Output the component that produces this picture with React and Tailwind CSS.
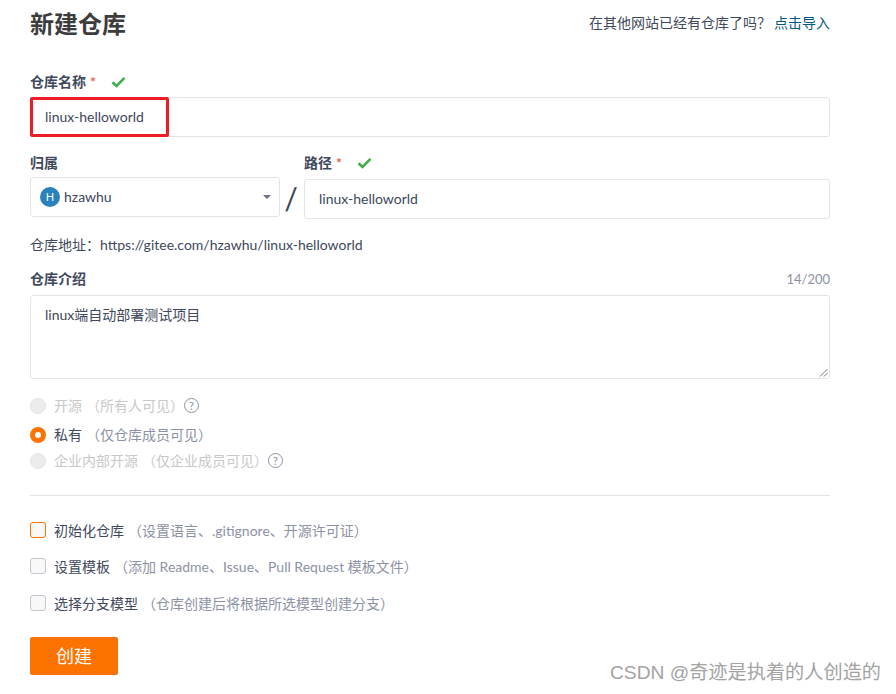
import React from "react";

const FONT = "font-['Lato','Noto_Sans_CJK_SC',sans-serif]";

const Check = () => (
  <svg width="15" height="12" viewBox="0 0 15 12" className="ml-[15px]">
    <path d="M1.5 6.2 L5.5 10 L13.5 1.8" fill="none" stroke="#3fae4b" strokeWidth="2.6" />
  </svg>
);

const Help = () => (
  <span className="mb-[2px] flex h-[15px] w-[15px] items-center justify-center rounded-full border border-[#8c92a4] text-[11px] leading-none text-[#8c92a4]">
    ?
  </span>
);

const Radio = ({ checked, label, hint, help, className }) => (
  <div className={`flex h-[16px] items-center ${className}`}>
    {checked ? (
      <span className="h-[16px] w-[16px] rounded-full border-[5px] border-[#fe7300] bg-white" />
    ) : (
      <span className="h-[16px] w-[16px] rounded-full border border-[#e3e3e3] bg-[#ececec]" />
    )}
    <span className={`ml-[8px] pb-[2px] text-[14px] ${checked ? "text-[#40485b]" : "text-[#c8c8c8]"}`}>{label}</span>
    <span className={`ml-[4px] pb-[2px] text-[14px] ${checked ? "text-[#8c92a4]" : "text-[#c8c8c8]"}`}>{hint}</span>
    {help && <Help />}
  </div>
);

const CheckRow = ({ active, label, hint, className }) => (
  <div className={`flex h-[16px] items-center ${className}`}>
    <span className={`h-[16px] w-[16px] rounded-[3px] border bg-[#f8f8f8] ${active ? "border-[#fe7300]" : "border-[#c4c7d1]"}`} />
    <span className="ml-[8px] text-[14px] text-[#40485b]">{label}</span>
    <span className="ml-[4px] text-[14px] text-[#8c92a4]">{hint}</span>
  </div>
);

const Label = ({ children }) => (
  <span className="text-[14px] leading-[18px] font-bold text-[#40485b]">{children}</span>
);

const Star = () => <span className="ml-[4px] text-[14px] leading-[18px] font-bold text-[#ee5a4f]">*</span>;

export default function App() {
  return (
    <div className={`relative h-[694px] w-[896px] overflow-hidden bg-white ${FONT}`}>
      <div className="w-[830px] pl-[30px]">
        {/* 标题 */}
        <div className="flex h-[48px] items-center justify-between">
          <h1 className="text-[24px] leading-[32px] font-bold text-[#3c3c3c]">新建仓库</h1>
          <div className="pb-[4px] text-[14px] text-[#40485b]">
            在其他网站已经有仓库了吗？<span className="ml-[3px] text-[#005980]">点击导入</span>
          </div>
        </div>

        {/* 仓库名称 */}
        <div className="mt-[25px] flex h-[18px] items-center">
          <Label>仓库名称</Label>
          <Star />
          <Check />
        </div>
        <div className="relative mt-[6px] flex h-[40px] items-center rounded-[3px] border border-[#e3e4eb] pb-[2px] pl-[14px] text-[14px] text-[#40485b]">
          linux-helloworld
          <div className="absolute top-[-1px] left-[-1px] h-[40px] w-[139px] rounded-[2px] border-[3px] border-[#ee1c25]" />
        </div>

        {/* 归属 / 路径 */}
        <div className="mt-[17px] flex">
          <div className="w-[250px]">
            <div className="flex h-[18px] items-center">
              <Label>归属</Label>
            </div>
            <div className="mt-[5px] flex h-[40px] items-center rounded-[3px] border border-[#e3e4eb] pr-[8px] pl-[9px] text-[14px] text-[#40485b]">
              <span className="flex h-[20px] w-[20px] items-center justify-center rounded-full bg-[#2a82bd] text-[11px] text-white">H</span>
              <span className="ml-[4px] flex-1 pb-[2px]">hzawhu</span>
              <span className="h-0 w-0 border-x-[4px] border-t-[4px] border-x-transparent border-t-[#6b7080]" />
            </div>
          </div>
          <div className="flex w-[24px] items-end justify-center pr-[2px] pb-[3px] text-[30px] leading-[36px] text-[#40485b]">/</div>
          <div className="flex-1">
            <div className="flex h-[18px] items-center">
              <Label>路径</Label>
              <Star />
              <Check />
            </div>
            <div className="mt-[7px] flex h-[40px] items-center rounded-[3px] border border-[#e3e4eb] pb-[2px] pl-[14px] text-[14px] text-[#40485b]">
              linux-helloworld
            </div>
          </div>
        </div>

        {/* 仓库地址 */}
        <div className="mt-[17px] text-[14px] leading-[18px] text-[#40485b]">
          仓库地址：https://gitee.com/hzawhu/linux-helloworld
        </div>

        {/* 仓库介绍 */}
        <div className="mt-[16px] flex h-[18px] items-center justify-between">
          <Label>仓库介绍</Label>
          <span className="pt-[2px] text-[13px] text-[#8c92a4]">14/200</span>
        </div>
        <div className="relative mt-[7px] h-[84px] rounded-[3px] border border-[#e3e4eb] px-[14px] pt-[10px] text-[14px] leading-[18px] text-[#40485b]">
          linux端自动部署测试项目
          <svg width="9" height="9" viewBox="0 0 9 9" className="absolute right-[1px] bottom-[1px]">
            <path d="M8.5 1 L1 8.5 M8.5 5 L5 8.5" stroke="#777" strokeWidth="1" />
          </svg>
        </div>

        {/* 可见性 */}
        <Radio className="mt-[19px]" label="开源" hint="（所有人可见）" help />
        <Radio className="mt-[13px]" checked label="私有" hint="（仅仓库成员可见）" />
        <Radio className="mt-[10px]" label="企业内部开源" hint="（仅企业成员可见）" help />

        <div className="mt-[26px] h-px bg-[#e3e3e3]" />

        {/* 初始化选项 */}
        <CheckRow className="mt-[26px]" active label="初始化仓库" hint="（设置语言、.gitignore、开源许可证）" />
        <CheckRow className="mt-[20px]" label="设置模板" hint="（添加 Readme、Issue、Pull Request 模板文件）" />
        <CheckRow className="mt-[21px]" label="选择分支模型" hint="（仓库创建后将根据所选模型创建分支）" />

        <button className="mt-[26px] h-[38px] w-[88px] rounded-[2px] bg-[#fe7300] text-[18px] text-white">创建</button>
      </div>

      {/* 水印 */}
      <div className="absolute top-[661px] left-[610px] font-['Liberation_Sans','Noto_Sans_CJK_SC',sans-serif] text-[19.2px] leading-[24px] whitespace-nowrap text-[#a3a3a3]">
        CSDN @奇迹是执着的人创造的
      </div>
    </div>
  );
}
